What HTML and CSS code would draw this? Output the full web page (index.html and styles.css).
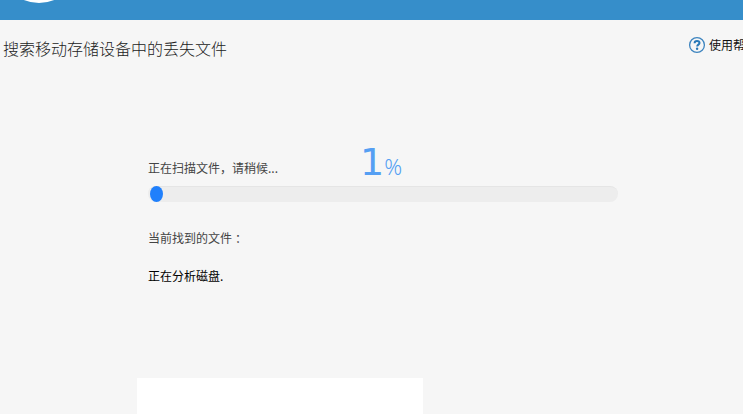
FILE: index.html
```html
<!DOCTYPE html>
<html lang="zh-CN">
<head>
    <meta charset="UTF-8">
    <title>搜索移动存储设备中的丢失文件</title>
    <link rel="stylesheet" href="styles.css">
</head>
<body>
    <header class="topbar">
        <div class="logo"></div>
    </header>
    <div class="title-row">
        <h1>搜索移动存储设备中的丢失文件</h1>
        <a class="help">
            <svg class="help-icon" width="18" height="18" viewBox="0 0 18 18" fill="none">
                <circle cx="9" cy="9" r="7.4" stroke="#3d84bf" stroke-width="1.3"/>
                <path d="M6.6 7.2C6.6 5.6 7.6 4.9 9 4.9s2.5.8 2.5 2.1c0 1.6-2.3 1.7-2.3 3.5" stroke="#2878b8" stroke-width="2"/>
                <circle cx="9.1" cy="12.7" r="1.2" fill="#2878b8"/>
            </svg>
            <span>使用帮助</span>
        </a>
    </div>
    <main class="scan">
        <div class="scan-head">
            <span class="status">正在扫描文件，请稍候...</span>
            <div class="percent">
                <span class="value">1</span>
                <span class="unit">%</span>
            </div>
        </div>
        <div class="progress">
            <div class="progress-bar"></div>
        </div>
        <p class="found">当前找到的文件<span class="colon">：</span></p>
        <p class="current">正在分析磁盘.</p>
    </main>
    <div class="panel"></div>
</body>
</html>
```

FILE: styles.css
```css
body {
    margin: 0;
    height: 414px;
    overflow: hidden;
    display: flex;
    flex-direction: column;
    background-color: #f6f6f6;
    color: #444;
    font-family: "Noto Sans CJK SC", sans-serif;
    font-size: 12px;
    line-height: 18px;
}
.topbar {
    height: 20px;
    flex: none;
    overflow: hidden;
    background-color: #368eca;
}
.logo {
    width: 80px;
    height: 80px;
    margin: -77px 0 0 -1px;
    border-radius: 50%;
    background-color: #fff;
}
.title-row {
    display: flex;
    height: 58px;
    flex: none;
    align-items: flex-start;
    justify-content: space-between;
}
h1 {
    margin: 16px 0 0 3px;
    font-size: 16px;
    line-height: 24px;
    font-weight: 300;
    color: #222;
}
.help {
    display: flex;
    width: 55px;
    margin-top: 16px;
    gap: 3px;
    white-space: nowrap;
    color: #111;
}
.help-icon {
    flex: none;
}
.scan {
    width: 470px;
    height: 300px;
    flex: none;
    box-sizing: border-box;
    margin-left: 148px;
    padding-top: 67px;
}
.scan-head {
    display: flex;
    height: 41px;
}
.status {
    width: 212px;
    padding-top: 14px;
}
.percent {
    display: flex;
    align-items: baseline;
    font-family: "Noto Sans", sans-serif;
    line-height: 34px;
    color: #559ff3;
}
.value {
    font-family: "DejaVu Sans", sans-serif;
    font-size: 38px;
}
.unit {
    font-size: 22px;
    font-weight: 300;
}
.progress {
    height: 16px;
    box-sizing: border-box;
    padding-left: 2px;
    border-top: 1px solid #e5e5e5;
    border-radius: 8px;
    background-color: #ededed;
}
.progress-bar {
    width: 13px;
    height: 16px;
    margin-top: -1px;
    border-radius: 50%;
    background-color: #2080fc;
}
.found {
    margin: 27px 0 0;
}
.colon {
    margin-left: 3px;
}
.current {
    margin: 20px 0 0;
    color: #000;
}
.panel {
    width: 286px;
    height: 36px;
    flex: none;
    margin-left: 137px;
    background-color: #fff;
}
```
